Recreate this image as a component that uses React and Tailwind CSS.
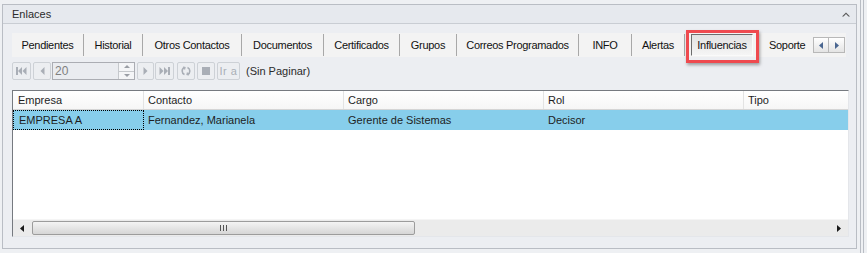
import React from 'react';

const TABS = [
  { label: 'Pendientes', w: 'w-[71px]' },
  { label: 'Historial', w: 'w-[58px]' },
  { label: 'Otros Contactos', w: 'w-[98px]' },
  { label: 'Documentos', w: 'w-[81px]' },
  { label: 'Certificados', w: 'w-[75px]' },
  { label: 'Grupos', w: 'w-[56px]' },
  { label: 'Correos Programados', w: 'w-[121px]' },
  { label: 'INFO', w: 'w-[52px]' },
  { label: 'Alertas', w: 'w-[52px]' },
];

const COLS = [
  { label: 'Empresa', w: 'w-[131px]', pad: 'pl-[5px]' },
  { label: 'Contacto', w: 'w-[200px]', pad: 'pl-[4px]' },
  { label: 'Cargo', w: 'w-[200px]', pad: 'pl-[4px]' },
  { label: 'Rol', w: 'w-[200px]', pad: 'pl-[4px]' },
  { label: 'Tipo', w: 'flex-1', pad: 'pl-[4px]' },
];

function PagerBtn({ className = '', children }) {
  return (
    <div className={`h-[18px] border border-[#cdd1d6] rounded-[2px] bg-[#eceef1] flex items-center justify-center text-[#a9aeb6] ${className}`}>
      {children}
    </div>
  );
}

export default function App() {
  return (
    <div className="w-[867px] h-[253px] bg-[#eef0f3] flex overflow-hidden font-['Liberation_Sans',Arial,sans-serif] text-[11px] text-[#1e1e1e]">
      {/* Panel */}
      <div className="ml-[2px] mt-[4px] w-[855px] h-[245px] border border-[#b9bdc4] bg-[#eceef2] flex flex-col">
        {/* Header */}
        <div className="h-[19px] border-b border-[#c9cdd3] bg-[#e6e9ee] flex items-center justify-between pl-[9px] pr-[6px]">
          <span className="text-[#2b2b2b]">Enlaces</span>
          <svg width="8" height="5" viewBox="0 0 8 5">
            <path d="M0 4.5 L4 0.5 L8 4.5 L6.5 4.5 L4 2 L1.5 4.5 Z" fill="#555" />
          </svg>
        </div>

        <div className="px-[9px] pt-[9px] flex flex-col">
          {/* Tabs */}
          <div className="h-[24px] w-[834px] bg-[#f3f3f3] flex items-center tracking-[-0.3px] text-[#111]">
            {TABS.map((t) => (
              <React.Fragment key={t.label}>
                <div className={`${t.w} text-center`}>{t.label}</div>
                <div className="w-px h-[22px] bg-[#a8a8a8]" />
              </React.Fragment>
            ))}
            <div className="ml-[6px] relative w-[62px] h-[22px] border border-t-[#6d6d6d] border-l-[#6d6d6d] border-b-[#fafafa] border-r-[#fafafa] bg-gradient-to-b from-[#e2e2e2] to-[#f5f5f5] flex items-center justify-center">
              Influencias
              <div className="absolute -left-[6px] -top-[5px] w-[73px] h-[33px] border-[3px] border-[#ef4a4f] shadow-[1px_2px_3px_rgba(0,0,0,0.35)]" />
            </div>
            <div className="w-[60px] pl-[16px]">Soporte</div>
            <div className="w-[16px] h-[16px] border border-[#b8b8b8] bg-gradient-to-b from-white to-[#e4e4e4] flex items-center justify-center">
              <svg width="4" height="7" viewBox="0 0 4 7"><path d="M4 0 L0 3.5 L4 7 Z" fill="#4a6690" /></svg>
            </div>
            <div className="w-[16px] h-[16px] border border-l-0 border-[#b8b8b8] bg-gradient-to-b from-white to-[#e4e4e4] flex items-center justify-center">
              <svg width="4" height="7" viewBox="0 0 4 7"><path d="M0 0 L4 3.5 L0 7 Z" fill="#4a6690" /></svg>
            </div>
          </div>

          {/* Pager */}
          <div className="mt-[5px] h-[18px] flex items-center">
            <PagerBtn className="w-[19px]">
              <svg width="11" height="8" viewBox="0 0 11 8" fill="currentColor">
                <rect x="0" y="0" width="2" height="8" />
                <path d="M6 0 L2 4 L6 8 Z" />
                <path d="M10.5 0 L6.5 4 L10.5 8 Z" />
              </svg>
            </PagerBtn>
            <PagerBtn className="w-[18px] ml-[2px]">
              <svg width="5" height="8" viewBox="0 0 5 8" fill="currentColor"><path d="M4.5 0 L0.5 4 L4.5 8 Z" /></svg>
            </PagerBtn>
            <div className="ml-[1px] w-[83px] h-[18px] border border-[#abadb3] bg-[#eaecf0] flex items-center">
              <span className="pl-[2px] flex-1 text-[#7f7f7f] text-[12px]">20</span>
              <div className="w-[16px] h-[16px] border-l border-[#c5c8cc] flex flex-col">
                <div className="flex-1 border-b border-[#c5c8cc] bg-[#f4f5f7] flex items-center justify-center">
                  <svg width="6" height="3" viewBox="0 0 6 3"><path d="M0 3 L3 0 L6 3 Z" fill="#9a9ea5" /></svg>
                </div>
                <div className="flex-1 bg-[#f4f5f7] flex items-center justify-center">
                  <svg width="6" height="3" viewBox="0 0 6 3"><path d="M0 0 L3 3 L6 0 Z" fill="#9a9ea5" /></svg>
                </div>
              </div>
            </div>
            <PagerBtn className="w-[17px] ml-[2px]">
              <svg width="5" height="8" viewBox="0 0 5 8" fill="currentColor"><path d="M0.5 0 L4.5 4 L0.5 8 Z" /></svg>
            </PagerBtn>
            <PagerBtn className="w-[19px] ml-[1px]">
              <svg width="11" height="8" viewBox="0 0 11 8" fill="currentColor">
                <path d="M0.5 0 L4.5 4 L0.5 8 Z" />
                <path d="M5 0 L9 4 L5 8 Z" />
                <rect x="9" y="0" width="2" height="8" />
              </svg>
            </PagerBtn>
            <PagerBtn className="w-[18px] ml-[3px]">
              <svg width="10" height="10" viewBox="0 0 10 10" fill="none" stroke="currentColor" strokeWidth="1.6">
                <path d="M3.5 1.5 A3.8 3.8 0 0 0 3.5 8.5" />
                <path d="M6.5 1.5 A3.8 3.8 0 0 1 6.5 8.5" />
                <path d="M2 1 L4 1.5 L3.5 3.5" strokeWidth="1.2" />
                <path d="M8 9 L6 8.5 L6.5 6.5" strokeWidth="1.2" />
              </svg>
            </PagerBtn>
            <PagerBtn className="w-[18px] ml-[2px]">
              <div className="w-[8px] h-[8px] bg-[#a9aeb6]" />
            </PagerBtn>
            <PagerBtn className="w-[23px] ml-[2px]">
              <span className="text-[11px] tracking-[0.5px]">Ir a</span>
            </PagerBtn>
            <span className="ml-[6px] text-[#2b2b2b]">(Sin Paginar)</span>
          </div>

          {/* Grid */}
          <div className="mt-[10px] w-[837px] h-[147px] border border-t-[#767a80] border-l-[#767a80] border-r-[#e4e6ea] border-b-[#e4e6ea] bg-white flex flex-col">
            <div className="h-[19px] border-b border-[#d5d5d5] bg-gradient-to-b from-white to-[#f6f6f6] flex">
              {COLS.map((c, i) => (
                <div key={c.label} className={`${c.w} ${c.pad} flex items-center ${i < COLS.length - 1 ? 'border-r border-[#e3e3e3]' : ''}`}>
                  {c.label}
                </div>
              ))}
            </div>
            <div className="h-[20px] bg-[#87ceeb] flex">
              <div className="w-[131px] pl-[5px] flex items-center border border-dotted border-black">EMPRESA A</div>
              <div className="w-[200px] pl-[4px] flex items-center">Fernandez, Marianela</div>
              <div className="w-[200px] pl-[4px] flex items-center">Gerente de Sistemas</div>
              <div className="w-[200px] pl-[4px] flex items-center">Decisor</div>
              <div className="flex-1" />
            </div>
            <div className="flex-1" />
            {/* Horizontal scrollbar */}
            <div className="h-[17px] bg-[#ebebeb] border-t border-[#f5f5f5] flex items-center">
              <svg className="ml-[7px]" width="4" height="7" viewBox="0 0 4 7"><path d="M4 0 L0 3.5 L4 7 Z" fill="#1a1a1a" /></svg>
              <div className="ml-[8px] w-[383px] h-[14px] rounded-[2px] border border-[#9c9c9c] bg-gradient-to-b from-[#f4f4f4] to-[#d6d6d6] flex items-center justify-center gap-[1px]">
                <div className="w-[1px] h-[6px] bg-[#555]" />
                <div className="w-[1px] h-[6px] bg-[#555] ml-[1px]" />
                <div className="w-[1px] h-[6px] bg-[#555] ml-[1px]" />
              </div>
              <div className="flex-1" />
              <svg className="mr-[7px]" width="4" height="7" viewBox="0 0 4 7"><path d="M0 0 L4 3.5 L0 7 Z" fill="#1a1a1a" /></svg>
            </div>
          </div>
        </div>
      </div>
      {/* Outer frame lines */}
      <div className="ml-[3px] h-full w-[4px] border-x border-[#b9bdc4]" />
    </div>
  );
}
